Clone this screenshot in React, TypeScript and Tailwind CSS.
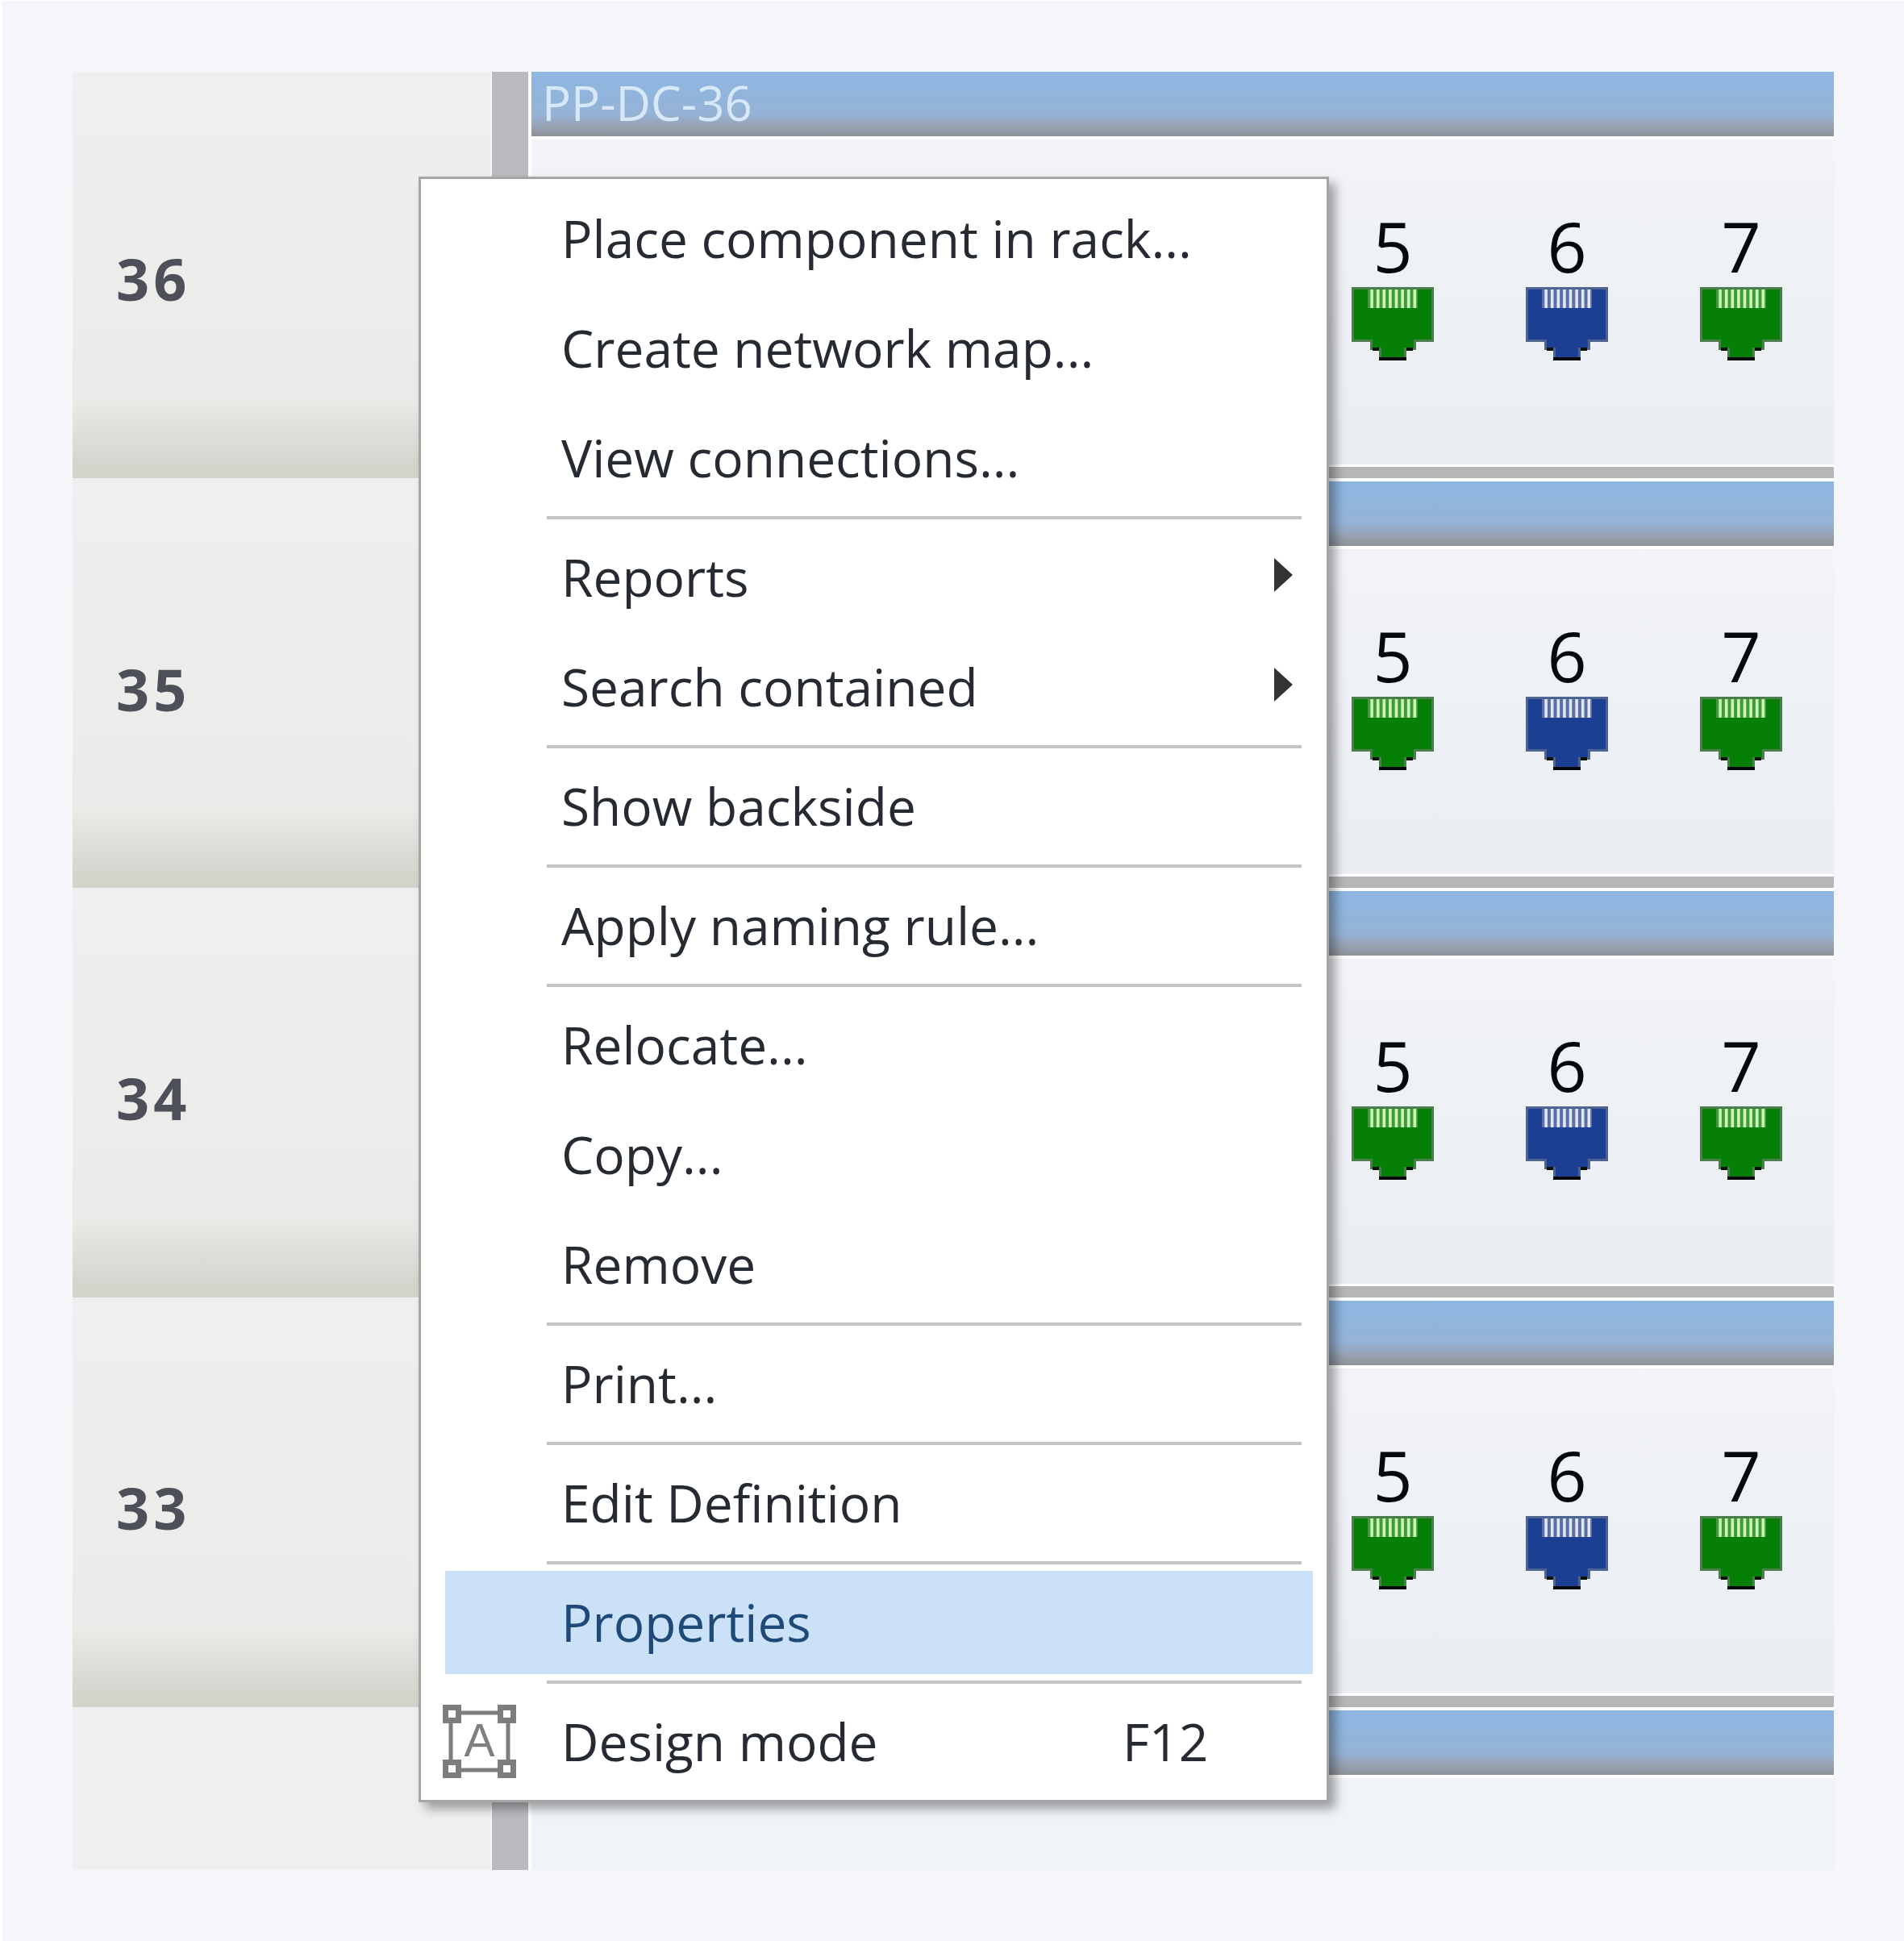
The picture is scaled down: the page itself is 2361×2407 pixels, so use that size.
const menuFont = "font-['Open_Sans','Liberation_Sans',sans-serif]";

function Rj45({ color, edge, pin, back }: { color: string; edge: string; pin: string; back: string }) {
  const pins = [0, 1, 2, 3, 4, 5, 6, 7];
  return (
    <svg width="102" height="91" viewBox="0 0 102 91" className="block">
      <path d="M0 0H102V68H80V78H68V91H34V78H23V68H0Z" fill={edge} />
      <path d="M3 3H99V65H77V75H65V87H37V75H26V65H3Z" fill={color} />
      <rect x="20" y="3" width="62" height="23" fill={back} />
      {pins.map((p) => (
        <rect key={p} x={23.3 + p * 7.6} y="3" width="3.6" height="23" fill={pin} />
      ))}
      <rect x="26" y="75" width="8" height="4" fill="#0a1208" />
      <rect x="68" y="75" width="8" height="4" fill="#0a1208" />
      <rect x="34" y="87" width="34" height="4" fill="#05090a" />
    </svg>
  );
}

function Port({ n, kind }: { n: number; kind: "green" | "blue" }) {
  return (
    <div className="flex w-[102px] flex-col items-center">
      <span className="h-[90px] font-['Open_Sans',sans-serif] text-[86px] leading-[78px] font-[380] text-[#05080e]">{n}</span>
      {kind === "green" ? (
        <Rj45 color="#067f06" edge="#4c7d4c" pin="#cdf7ae" back="#3f9a3f" />
      ) : (
        <Rj45 color="#1c3f94" edge="#4d6491" pin="#e4e6ee" back="#5a6fa8" />
      )}
    </div>
  );
}

function RackUnit({ label, last }: { label?: string; last?: boolean }) {
  return (
    <div className="flex flex-col">
      <div className="h-[80px] bg-[linear-gradient(to_bottom,#8db6e2_0%,#95b3d6_65%,#96a3b4_84%,#8f9298_100%)] pl-[13px] font-['Open_Sans',sans-serif] text-[60px] leading-[76px] text-[#d8e8f8]">
        {label}
      </div>
      <div className="h-[4px]" />
      {last ? (
        <div className="h-[114px] bg-[#f0f3f7]" />
      ) : (
        <>
          <div className="flex h-[403px] justify-end gap-[114px] bg-[linear-gradient(to_bottom,#f2f4f7,#eaedf2)] pt-[93px] pr-[64px]">
            <Port n={5} kind="green" />
            <Port n={6} kind="blue" />
            <Port n={7} kind="green" />
          </div>
          <div className="h-[3px]" />
          <div className="h-[14px] bg-[#b6b6b9]" />
          <div className="h-[4px]" />
        </>
      )}
    </div>
  );
}

function RowCell({ n, h, pt }: { n: number; h: string; pt: string }) {
  return (
    <div className={`${h} ${pt} flex items-center bg-[linear-gradient(to_bottom,#efeff0_0%,#ecebe9_80%,#d4d3cc_97%,#d4d3cc_100%)] pl-[54px]`}>
      <span className="font-['Open_Sans',sans-serif] text-[72px] font-bold tracking-[5px] text-[#4d5058]">{n}</span>
    </div>
  );
}

function Separator() {
  return <div className="ml-[126px] mr-[14px] h-[4px] bg-[#c4c4c4]" />;
}

function Arrow() {
  return (
    <svg width="23" height="42" viewBox="0 0 23 42" className="absolute top-[40px] right-[25px]">
      <path d="M0 0L23 21L0 42Z" fill="#333" />
    </svg>
  );
}

function Item({ text, active, sub, shortcut, icon }: { text: string; active?: boolean; sub?: boolean; shortcut?: string; icon?: boolean }) {
  return (
    <div className={`relative flex h-[128px] items-center pl-[144px] ${active ? "bg-[#cae1f8] text-[#1f4a78]" : "text-[#262a31]"}`}>
      {icon && (
        <svg width="91" height="91" viewBox="0 0 91 91" className="absolute top-[18px] left-[-3px]">
          <rect x="10" y="10" width="71" height="71" fill="none" stroke="#7d7d7d" strokeWidth="5" />
          {[
            [0, 0],
            [68, 0],
            [0, 68],
            [68, 68],
          ].map(([x, y]) => (
            <rect key={`${x}-${y}`} x={x + 3.5} y={y + 3.5} width="16" height="16" fill="#fff" stroke="#7d7d7d" strokeWidth="7" />
          ))}
          <text x="45.5" y="64" textAnchor="middle" fontFamily="Liberation Sans, sans-serif" fontSize="57" fill="#7f7f7f">
            A
          </text>
        </svg>
      )}
      <span className="whitespace-nowrap">{text}</span>
      {sub && <Arrow />}
      {shortcut && <span className="absolute left-[840px]">{shortcut}</span>}
    </div>
  );
}

function ContextMenu() {
  return (
    <div className={`absolute top-[218px] left-[517px] flex w-[1129px] flex-col gap-[8px] border-[3px] border-[#a6a6a6] bg-white pt-[10px] pr-[17px] pb-[8px] pl-[30px] text-[64px] font-[450] shadow-[8px_8px_12px_rgba(0,0,0,0.35)] ${menuFont}`}>
      <Item text="Place component in rack..." />
      <Item text="Create network map..." />
      <Item text="View connections..." />
      <Separator />
      <Item text="Reports" sub />
      <Item text="Search contained" sub />
      <Separator />
      <Item text="Show backside" />
      <Separator />
      <Item text="Apply naming rule..." />
      <Separator />
      <Item text="Relocate..." />
      <Item text="Copy..." />
      <Item text="Remove" />
      <Separator />
      <Item text="Print..." />
      <Separator />
      <Item text="Edit Definition" />
      <Separator />
      <Item text="Properties" active />
      <Separator />
      <Item text="Design mode" shortcut="F12" icon />
    </div>
  );
}

export default function App() {
  return (
    <div className="relative h-[2407px] w-[2361px] overflow-hidden border-t border-l-2 border-white bg-[#f4f6fa] pt-[88px] pl-[88px]">
      <div className="flex h-[2230px] w-[2184px]">
        <div className="flex w-[518px] flex-col">
          <RowCell n={36} h="h-[504px]" pt="pt-[8px]" />
          <RowCell n={35} h="h-[508px]" pt="pt-[14px]" />
          <RowCell n={34} h="h-[508px]" pt="pt-[12px]" />
          <RowCell n={33} h="h-[508px]" pt="pt-[12px]" />
          <div className="flex-1 bg-[#efeff0]" />
        </div>
        <div className="ml-[2px] w-[45px] bg-[#b9bbc0]" />
        <div className="flex-1 bg-white pl-[4px]">
          <RackUnit label="PP-DC-36" />
          <RackUnit />
          <RackUnit />
          <RackUnit />
          <RackUnit last />
        </div>
      </div>
      <ContextMenu />
    </div>
  );
}
